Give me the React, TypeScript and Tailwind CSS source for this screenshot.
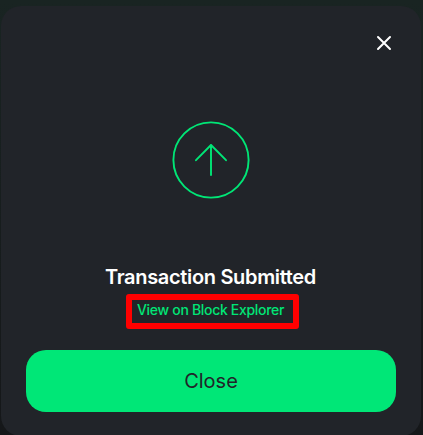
function CloseIcon() {
  return (
    <svg width="16" height="16" viewBox="0 0 16 16" fill="none" stroke="#ffffff" strokeWidth="2" strokeLinecap="round">
      <path d="M2 2L14 14M14 2L2 14" />
    </svg>
  );
}

function SubmittedIcon() {
  return (
    <svg width="80" height="80" viewBox="0 0 80 80" fill="none" stroke="#00e676" strokeWidth="1.9" strokeLinecap="round" strokeLinejoin="round">
      <circle cx="40" cy="40" r="37.6" />
      <path d="M25 40.2L40 25L55 40.2M40 25V55" />
    </svg>
  );
}

export default function App() {
  return (
    <div className="h-[435px] w-[423px] overflow-hidden bg-linear-to-b from-[#192422] to-[#151719] pt-1.5 pr-0.5 pl-px font-['Inter',sans-serif]">
      <div className="flex h-[430px] flex-col rounded-[20px] bg-[#212429] px-[25px]">
        <div className="flex justify-end pt-[29px]">
          <button aria-label="Dismiss" className="mr-1">
            <CloseIcon />
          </button>
        </div>
        <div className="mt-[69px] flex justify-center">
          <SubmittedIcon />
        </div>
        <h1 className="mt-[62px] mr-px text-center text-[20px] leading-[30px] font-semibold tracking-[-0.33px] text-white">Transaction Submitted</h1>
        <a className="mt-0.5 ml-[100px] flex h-[35px] w-[173px] rounded-[3px] border-6 border-[#ff0000] pt-[3px] pl-[5px] text-[14px] leading-[14px] font-medium tracking-[-0.31px] whitespace-nowrap text-[#00e676]">
          View on Block Explorer
        </a>
        <button className="mt-[21px] h-[62px] w-full rounded-[20px] bg-[#00e777] text-[20px] text-[#212429]">Close</button>
      </div>
    </div>
  );
}
